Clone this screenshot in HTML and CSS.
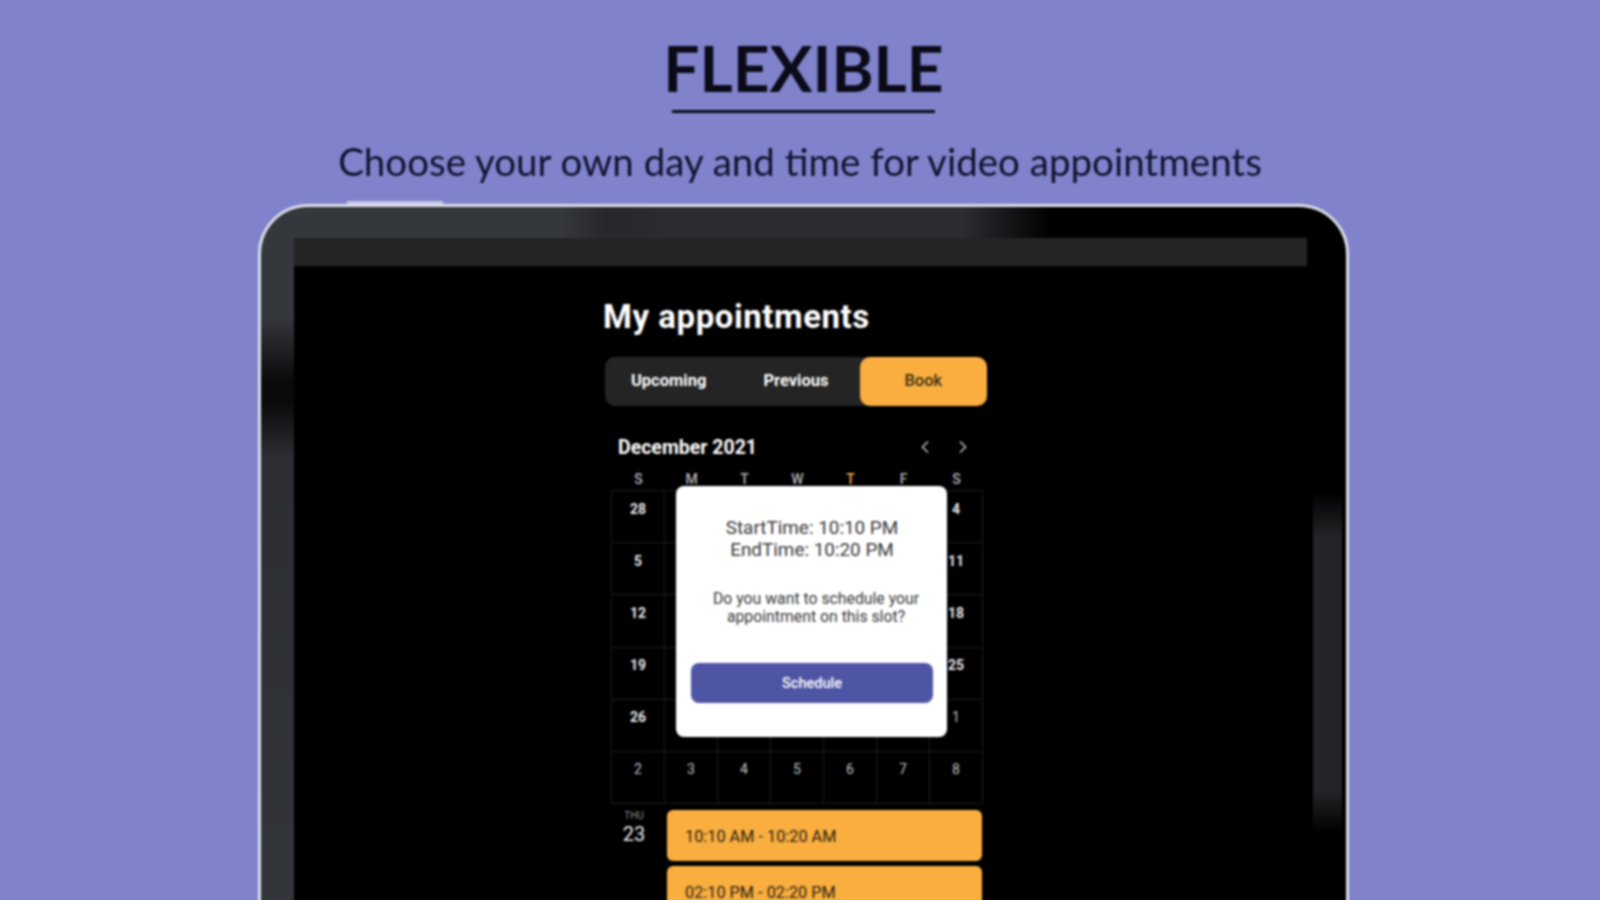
FILE: index.html
```html
<html>
    <head>
        <meta charset="utf-8">
        <title>Flexible</title>
        <link rel="stylesheet" href="styles.css">
    </head>
    <body>
        <div class="page">
            <h1 class="headline">FLEXIBLE</h1>
            <div class="rule"></div>
            <p class="subhead">Choose your own day and time for video appointments</p>

            <div class="tablet">
                <div class="screen">
                    <div class="statusbar"></div>
                    <div class="app">
                        <h2 class="app-title">My appointments</h2>

                        <div class="tabs">
                            <div class="tab">Upcoming</div>
                            <div class="tab">Previous</div>
                            <div class="tab active">Book</div>
                        </div>

                        <div class="month">
                            <span class="month-name">December 2021</span>
                            <div class="arrows">
                                <svg width="10" height="14" viewBox="0 0 10 14"><path d="M8 1.5 2.5 7 8 12.5"/></svg>
                                <svg width="10" height="14" viewBox="0 0 10 14"><path d="M2 1.5 7.5 7 2 12.5"/></svg>
                            </div>
                        </div>

                        <div class="calendar">
                            <div class="weekdays">
                                <div>S</div>
                                <div>M</div>
                                <div>T</div>
                                <div>W</div>
                                <div class="today">T</div>
                                <div>F</div>
                                <div>S</div>
                            </div>
                            <div class="days">
                                <div class="day">28</div><div class="day"></div><div class="day"></div><div class="day"></div><div class="day"></div><div class="day"></div><div class="day">4</div>
                                <div class="day">5</div><div class="day"></div><div class="day"></div><div class="day"></div><div class="day"></div><div class="day"></div><div class="day">11</div>
                                <div class="day">12</div><div class="day"></div><div class="day"></div><div class="day"></div><div class="day"></div><div class="day"></div><div class="day">18</div>
                                <div class="day">19</div><div class="day"></div><div class="day"></div><div class="day"></div><div class="day"></div><div class="day"></div><div class="day">25</div>
                                <div class="day">26</div><div class="day"></div><div class="day"></div><div class="day"></div><div class="day"></div><div class="day"></div><div class="day dim">1</div>
                                <div class="day dim">2</div><div class="day dim">3</div><div class="day dim">4</div><div class="day dim">5</div><div class="day dim">6</div><div class="day dim">7</div><div class="day dim">8</div>
                            </div>

                            <div class="modal">
                                <div class="times">
                                    <div>StartTime: 10:10 PM</div>
                                    <div>EndTime: 10:20 PM</div>
                                </div>
                                <p class="question">Do you want to schedule your appointment on this slot?</p>
                                <div class="schedule">Schedule</div>
                            </div>
                        </div>

                        <div class="slots">
                            <div class="slot-date">
                                <div class="slot-dow">THU</div>
                                <div class="slot-num">23</div>
                            </div>
                            <div class="slot-list">
                                <div class="slot">10:10 AM - 10:20 AM</div>
                                <div class="slot">02:10 PM - 02:20 PM</div>
                            </div>
                        </div>
                    </div>
                </div>
            </div>
        </div>
    </body>
</html>
```

FILE: styles.css
```css
html, body {
    margin: 0;
    height: 900px;
    overflow: hidden;
    background-color: #8083cb;
}

.page {
    display: flex;
    flex-direction: column;
    align-items: center;
    padding-top: 32px;
    filter: blur(0.8px);
}

.headline {
    margin: 0 0 0 7px;
    font-family: "Lato", sans-serif;
    font-size: 64px;
    line-height: 72px;
    font-weight: 700;
    color: #0a0a18;
}

.rule {
    width: 263px;
    height: 3px;
    margin: 6px 0 0 7px;
    background-color: #0a0a18;
}

.subhead {
    margin: 25px 0 0 0;
    font-family: "Lato", sans-serif;
    font-size: 38.5px;
    line-height: 46px;
    color: #11122e;
}

/* device frame */
.tablet {
    position: relative;
    box-sizing: border-box;
    width: 1091px;
    height: 760px;
    margin: 20px 0 0 7px;
    padding: 31px 39px 0 33px;
    border: 3px solid #dcdee8;
    border-bottom: none;
    border-radius: 50px 50px 0 0;
    background-color: #000;
    background-image:
        linear-gradient(to right, #34373c 0, #34373c 300px, #26282b 345px, #2b2d31 420px, #2b2d31 700px, #000 790px),
        linear-gradient(to bottom, #34373c 0, #34373c 110px, #0a0a0a 175px, #0a0a0a 195px, #2c2e33 250px, #33363b 100%),
        linear-gradient(to bottom, #000 285px, #222427 330px, #222427 585px, #000 625px);
    background-size: 100% 31px, 33px 100%, 29px 100%;
    background-position: 0 0, 0 0, right 4px top 0;
    background-repeat: no-repeat;
}

.tablet::before {
    content: "";
    position: absolute;
    top: -6px;
    left: 86px;
    width: 96px;
    height: 3px;
    background-color: #c3c6e6;
}

.screen {
    height: 100%;
    background-color: #000;
}

.statusbar {
    height: 28px;
    background-color: #242424;
}

.app {
    width: 384px;
    margin-left: 309px;
    padding-top: 32px;
    font-family: "Roboto", sans-serif;
    color: #fff;
}

.app-title {
    margin: 0;
    font-size: 33px;
    line-height: 38px;
    font-weight: 700;
    letter-spacing: 0.55px;
}

.tabs {
    display: flex;
    height: 49px;
    margin: 21px 0 0 2px;
    border-radius: 10px;
    background-color: #242424;
}

.tab {
    flex: 1;
    display: flex;
    align-items: center;
    justify-content: center;
    font-size: 16.5px;
    font-weight: 700;
    padding-bottom: 3px;
    box-sizing: border-box;
    border-radius: 10px;
}

.tab.active {
    background-color: #f9ae3f;
    color: #3d2f12;
    font-weight: 500;
}

.month {
    display: flex;
    justify-content: space-between;
    align-items: center;
    height: 24px;
    margin: 29px 0 0 15px;
}

.month-name {
    font-size: 19.5px;
    font-weight: 700;
}

.arrows {
    display: flex;
    gap: 28px;
    margin-right: 19px;
}

.arrows path {
    fill: none;
    stroke: #b9b9b9;
    stroke-width: 1.6;
}

.calendar {
    position: relative;
    width: 371px;
    margin: 12px 0 0 9px;
}

.weekdays {
    display: grid;
    grid-template-columns: repeat(7, 53px);
    height: 19px;
    font-size: 14px;
    line-height: 16px;
    font-weight: 500;
    text-align: center;
    color: #b5b5b5;
}

.weekdays .today {
    color: #f9ae3f;
}

.days {
    display: grid;
    grid-template-columns: repeat(7, 53px);
    grid-auto-rows: 52.2px;
    border-left: 1px solid #1c1c1c;
    border-top: 1px solid #1c1c1c;
    margin-left: -1px;
}

.day {
    box-sizing: border-box;
    padding-top: 8.5px;
    font-size: 14px;
    line-height: 18px;
    font-weight: 700;
    text-align: center;
    color: #e8e8e8;
    border-right: 1px solid #1c1c1c;
    border-bottom: 1px solid #1c1c1c;
}

.day.dim {
    font-weight: 400;
    color: #c4c4c4;
}

/* popup over the calendar */
.modal {
    position: absolute;
    top: 15px;
    left: 64px;
    box-sizing: border-box;
    width: 271px;
    height: 251px;
    padding: 31px 14px 0 15px;
    border-radius: 8px;
    background-color: #fff;
    text-align: center;
    color: #3a3a3a;
}

.times {
    font-size: 18.9px;
    line-height: 22px;
}

.question {
    margin: 29px 0 0 8px;
    font-size: 15.8px;
    line-height: 18px;
}

.schedule {
    display: flex;
    align-items: center;
    justify-content: center;
    height: 40px;
    margin-top: 37px;
    border-radius: 8px;
    background-color: #4f55a5;
    font-size: 14.5px;
    font-weight: 500;
    color: #fff;
}

.slots {
    display: flex;
    margin: 6px 0 0 9px;
}

.slot-date {
    width: 55px;
    padding-right: 11px;
    box-sizing: border-box;
    text-align: center;
}

.slot-dow {
    font-size: 10px;
    line-height: 12px;
    color: #8c8c8c;
}

.slot-num {
    font-size: 20px;
    line-height: 24px;
    color: #e8e8e8;
}

.slot-list {
    display: flex;
    flex-direction: column;
    gap: 5px;
    width: 315px;
}

.slot {
    display: flex;
    align-items: center;
    box-sizing: border-box;
    height: 51px;
    padding: 1px 0 0 18px;
    border-radius: 6px;
    background-color: #f9ae3f;
    font-size: 16.3px;
    color: #2b2210;
}
```
